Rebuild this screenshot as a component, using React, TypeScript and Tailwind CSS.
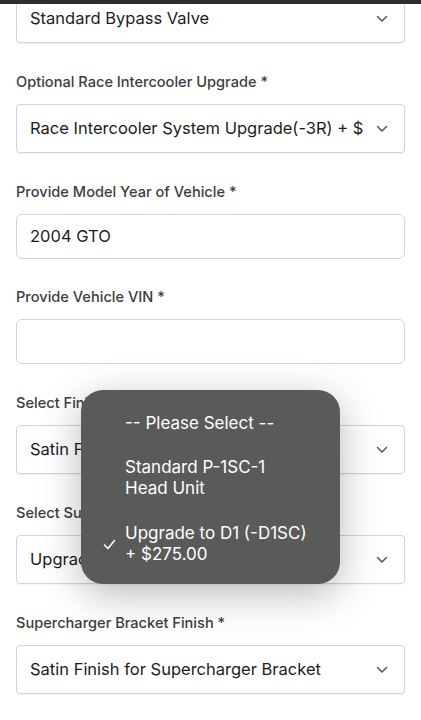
import * as React from "react";

function Chevron() {
  return (
    <svg width="12" height="8" viewBox="0 0 12 8" className="shrink-0">
      <polyline
        points="1.5,1.5 6,6 10.5,1.5"
        fill="none"
        stroke="#555"
        strokeWidth="1.5"
        strokeLinecap="round"
        strokeLinejoin="round"
      />
    </svg>
  );
}

function Label({ children }: { children: React.ReactNode }) {
  return (
    <div className="text-[14.6px] leading-[18px] font-medium text-[#3d3d3d] mb-[13px]">
      {children}
    </div>
  );
}

function SelectBox({ value, className = "" }: { value: string; className?: string }) {
  return (
    <div
      className={`h-[49px] w-[389px] flex items-center justify-between pl-[13px] pr-[16px] bg-white border border-[#d4d4d4] rounded-[4px] shadow-[0_1px_1px_rgba(0,0,0,0.05)] ${className}`}
    >
      <span className="text-[16.5px] text-[#1c1c1c] whitespace-nowrap overflow-hidden">
        {value}
      </span>
      <Chevron />
    </div>
  );
}

function TextBox({ value }: { value: string }) {
  return (
    <div className="h-[45px] w-[389px] flex items-center pl-[13px] bg-white border border-[#d4d4d4] rounded-[6px]">
      <span className="text-[16.5px] text-[#1c1c1c]">{value}</span>
    </div>
  );
}

export default function App() {
  return (
    <div
      className="relative w-[421px] h-[720px] overflow-hidden bg-white"
      style={{ fontFamily: "Inter, 'Noto Sans', sans-serif" }}
    >
      <div className="px-4 flex flex-col">
        <SelectBox value="Standard Bypass Valve" className="-mt-[6px]" />

        <div className="mt-[30px]">
          <Label>Optional Race Intercooler Upgrade *</Label>
          <SelectBox value="Race Intercooler System Upgrade(-3R) + $" />
        </div>

        <div className="mt-[30px]">
          <Label>Provide Model Year of Vehicle *</Label>
          <TextBox value="2004 GTO" />
        </div>

        <div className="mt-[29px]">
          <Label>Provide Vehicle VIN *</Label>
          <TextBox value="" />
        </div>

        <div className="mt-[30px]">
          <Label>Select Finish for Supercharger *</Label>
          <SelectBox value="Satin Finish for Supercharger" />
        </div>

        <div className="mt-[30px]">
          <Label>Select Supercharger Head Unit *</Label>
          <SelectBox value="Upgrade to D1 (-D1SC) + $275.00" />
        </div>

        <div className="mt-[30px]">
          <Label>Supercharger Bracket Finish *</Label>
          <SelectBox value="Satin Finish for Supercharger Bracket" />
        </div>
      </div>

      {/* top status strip */}
      <div className="absolute left-0 top-0 w-full h-[4px] bg-[#2e2e2e]" />

      {/* native picker popup */}
      <div className="absolute left-[81px] top-[390px] w-[259px] h-[194px] rounded-[22px] bg-[#5a5a5a] shadow-[0_10px_40px_rgba(0,0,0,0.28)] text-white text-[17px] leading-[21px]">
        <div className="flex flex-col pt-[23px]">
          <div className="pl-[44px]">-- Please Select --</div>
          <div className="pl-[44px] mt-[23px]">
            Standard P-1SC-1
            <br />
            Head Unit
          </div>
          <div className="relative pl-[44px] mt-[24px]">
            <svg
              width="13"
              height="11"
              viewBox="0 0 13 11"
              className="absolute left-[22px] top-[16px]"
            >
              <polyline
                points="1.5,6 5,9.5 11.5,1.5"
                fill="none"
                stroke="white"
                strokeWidth="1.6"
                strokeLinecap="round"
                strokeLinejoin="round"
              />
            </svg>
            Upgrade to D1 (-D1SC)
            <br />+ $275.00
          </div>
        </div>
      </div>
    </div>
  );
}
